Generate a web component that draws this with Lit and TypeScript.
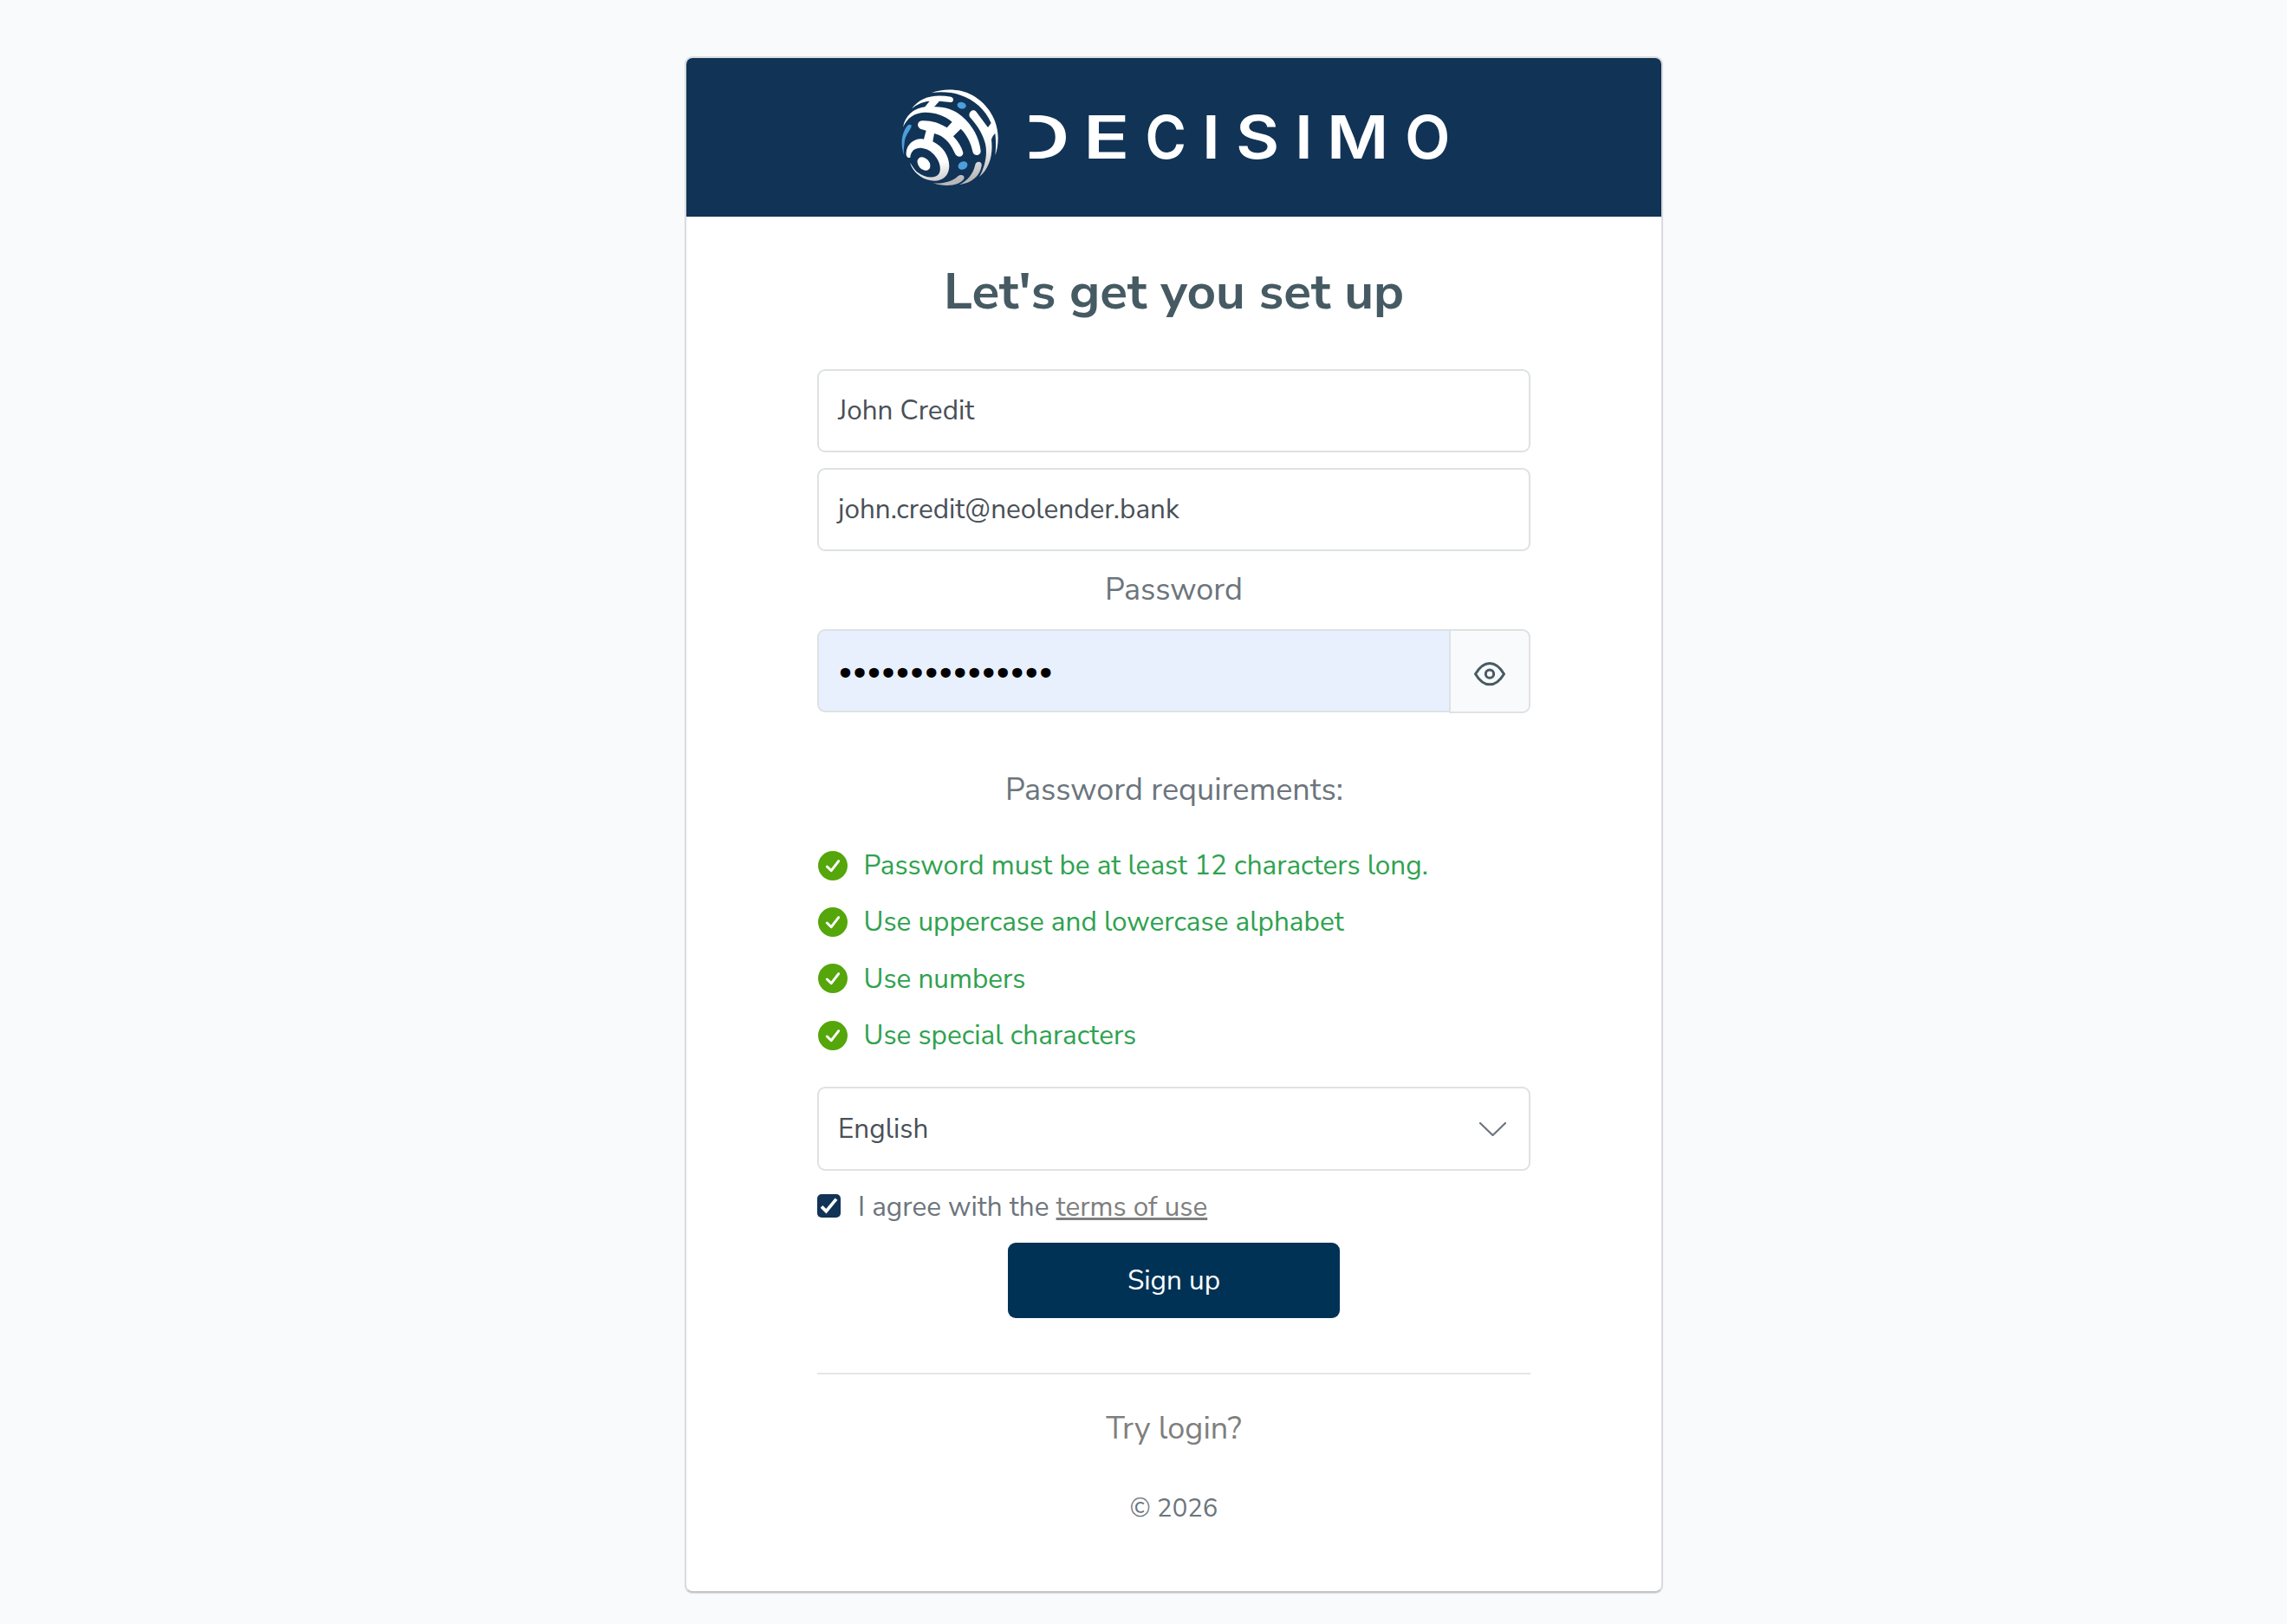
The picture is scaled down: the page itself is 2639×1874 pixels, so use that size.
import { LitElement, html, svg, css } from 'lit';
import { customElement, property, state } from 'lit/decorators.js';

interface Letter {
  char: string;
  width: number; // drawn width in px
  gap: number; // space before the letter
  scale: number;
  cut?: boolean; // drop the left stem
}

const WORDMARK: Letter[] = [
  { char: 'D', width: 42, gap: 0, scale: 1.38, cut: true },
  { char: 'E', width: 44, gap: 25.5, scale: 1.29 },
  { char: 'C', width: 42, gap: 25, scale: 0.94 },
  { char: 'I', width: 10, gap: 26, scale: 1.1 },
  { char: 'S', width: 46, gap: 26, scale: 1.13 },
  { char: 'I', width: 10, gap: 25.5, scale: 1.1 },
  { char: 'M', width: 62, gap: 26, scale: 1.13 },
  { char: 'O', width: 47, gap: 26, scale: 0.99 },
];

@customElement('brand-logo')
export class BrandLogo extends LitElement {
  static styles = css`
    :host {
      display: flex;
      align-items: center;
    }

    .globe {
      display: block;
      width: 112px;
      height: 112px;
      flex: none;
    }

    .wordmark {
      display: flex;
      margin-left: 35.5px;
      height: 50px;
      color: #fff;
      font-family: Inter, sans-serif;
      font-weight: 620;
      font-size: 68.5px;
      line-height: 50px;
    }

    .letter {
      display: flex;
      justify-content: center;
    }

    .letter.cut {
      justify-content: flex-end;
    }

    .letter.cut .glyph {
      transform-origin: 93% 50%;
      clip-path: inset(-20px -4px -20px 15.5px);
      margin-right: -3.5px;
    }
  `;

  render() {
    return html`
      <svg class="globe" viewBox="58 37 336 336">
        <defs>
          <linearGradient id="shade" gradientUnits="userSpaceOnUse" x1="215" y1="60" x2="275" y2="370">
            <stop offset="0.7" stop-color="#fff" />
            <stop offset="1" stop-color="#b4b4b6" />
          </linearGradient>
          <linearGradient id="edge" gradientUnits="userSpaceOnUse" x1="330" y1="180" x2="350" y2="340">
            <stop offset="0" stop-color="#fff" />
            <stop offset="0.4" stop-color="#f2f2f2" />
            <stop offset="1" stop-color="#b8b8ba" />
          </linearGradient>
        </defs>
        <g fill="url(#edge)">
          <path d="M163 49 C205 34 262 34 305 58 C358 88 393 145 393 205 C393 230 390 248 383 266 C386 240 386 215 383 190 C378 194 372 202 370 212 C376 258 366 310 328 340 C348 305 357 262 349 226 C340 190 318 158 295 133 C288 119 304 101 317 114 L358 169 L369 154 C350 108 310 72 262 57 C232 47 200 45 163 49 Z" />
          <path d="M314 298 C318 283 339 286 336 302 C331 335 305 361 258 368 C286 353 306 334 314 298 Z" />
          <path d="M252 340 C262 329 280 334 275 347 C262 369 215 378 168 362 C205 365 232 356 252 340 Z" />
        </g>
        <g fill="#fff">
          <path d="M94 104 C122 66 168 52 230 63 C243 67 239 83 228 82 L190 78 L172 98 C210 97 240 107 268 131 C305 162 328 205 333 250 C334 268 311 270 306 256 C299 222 286 196 264 174 L238 200 C255 218 267 238 272 256 C273 273 251 275 244 260 C232 229 212 206 188 195 L172 190 L167 218 C203 236 224 268 224 304 C223 340 196 359 160 353 C124 346 98 322 88 291 C98 303 101 314 115 325 C138 342 174 350 189 329 C203 302 177 258 146 245 C120 234 92 240 89 273 C80 278 74 268 75 257 C77 226 105 204 136 210 L144 180 L124 174 C108 164 116 145 132 146 C162 145 190 154 216 170 L234 150 C205 126 172 116 138 117 C103 119 79 136 64 168 C72 128 101 103 140 98 L156 78 C132 80 112 89 94 104 Z" fill="url(#shade)" />
          <ellipse cx="136" cy="295" rx="19" ry="26" transform="rotate(-41 136 295)" />
        </g>
        <g fill="#4a9fdc">
          <ellipse cx="267" cy="93" rx="15.500" ry="11.500" transform="rotate(12 267 93)" />
          <ellipse cx="271" cy="301" rx="17" ry="13.500" transform="rotate(-28 271 301)" />
          <path d="M80 162 C89 156 96 160 92 169 C82 190 71 198 69 222 C67 239 65 252 68 266 C54 230 58 188 80 162 Z" />
        </g>
      </svg>
      <div class="wordmark">
        ${WORDMARK.map(
          (l) => html`<span class="letter ${l.cut ? 'cut' : ''}" style="width:${l.width}px;margin-left:${l.gap}px"
            ><span class="glyph" style="transform:scaleX(${l.scale})">${l.char}</span></span
          >`,
        )}
      </div>
    `;
  }
}

@customElement('requirement-item')
export class RequirementItem extends LitElement {
  @property({ type: String }) label = '';

  static styles = css`
    :host {
      display: flex;
      align-items: center;
      gap: 18.5px;
      height: 65.3px;
      color: #2fa24f;
    }

    svg {
      width: 34px;
      height: 34px;
      flex: none;
      margin-left: 1px;
    }

    span {
      padding-top: 1px;
    }
  `;

  render() {
    return html`
      <svg viewBox="0 0 34 34">
        <circle cx="17" cy="17" r="17" fill="#54a60a" />
        <path d="M10.300 18 L15.200 22.600 L23.700 11.700" fill="none" stroke="#fff" stroke-width="3" stroke-linecap="round" stroke-linejoin="round" />
      </svg>
      <span>${this.label}</span>
    `;
  }
}

@customElement('app-root')
export class AppRoot extends LitElement {
  @state() private name = 'John Credit';
  @state() private email = 'john.credit@neolender.bank';
  @state() private passwordLength = 15;
  @state() private requirements = [
    'Password must be at least 12 characters long.',
    'Use uppercase and lowercase alphabet',
    'Use numbers',
    'Use special characters',
  ];

  static styles = css`
    :host {
      display: block;
      box-sizing: border-box;
      min-height: 1874px;
      padding: 65px 0 0 70px;
      background: #f9fafc;
      color: #6c757d;
      font-family: 'Nunito Sans', Nunito, 'Noto Sans', sans-serif;
      font-size: 31.5px;
      line-height: 1.4;
    }

    * {
      box-sizing: border-box;
    }

    .card {
      width: 1129px;
      height: 1773px;
      margin: 0 auto;
      background: #fff;
      border: 2px solid #d9dcdf;
      border-bottom-color: #c4c6c8;
      border-radius: 9px;
      box-shadow: 0 1px 1px rgba(0, 0, 0, 0.12);
      overflow: hidden;
    }

    .header {
      display: flex;
      height: 183px;
      padding: 0 0 0 248px;
      background: #113356;
    }

    .body {
      display: flex;
      flex-direction: column;
      padding: 0 151px;
    }

    h1 {
      margin: 47px 0 49px;
      height: 80px;
      line-height: 80px;
      font-size: 58.5px;
      font-weight: 700;
      color: #465a63;
      text-align: center;
    }

    .field {
      display: flex;
      align-items: center;
      height: 96px;
      padding: 0 22px;
      border: 2px solid #dee2e3;
      border-radius: 9px;
      color: #495057;
    }

    .field + .field {
      margin-top: 18px;
    }

    .label {
      height: 90px;
      line-height: 89px;
      font-size: 36px;
      text-align: center;
    }

    .group {
      display: flex;
      align-items: flex-start;
      height: 97px;
    }

    .password {
      flex: 1;
      border-right: 0;
      border-radius: 9px 0 0 9px;
      background: #e8f0fe;
      color: #000;
      font-family: 'DejaVu Sans', sans-serif;
      font-size: 39px;
      letter-spacing: -6.480px;
      padding: 8px 0 0 19px;
    }

    .toggle {
      display: flex;
      align-items: center;
      justify-content: center;
      width: 94px;
      height: 97px;
      padding-top: 7px;
      border: 2px solid #dee2e3;
      border-radius: 0 9px 9px 0;
      background: #f9fafc;
    }

    .toggle svg {
      width: 36px;
      height: 27.3px;
    }

    .requirements-title {
      margin-top: 44px;
      padding-left: 1px;
    }

    .requirements {
      margin-top: 9px;
    }

    .select {
      height: 97px;
      margin-top: 27px;
      justify-content: space-between;
      padding-right: 26.5px;
    }

    .select svg {
      width: 31px;
      height: 16px;
    }

    .terms {
      display: flex;
      align-items: center;
      height: 83px;
    }

    .terms svg {
      width: 27px;
      height: 27px;
      margin: -2px 20px 0 0;
    }

    .terms a {
      color: #7f7f7f;
      text-decoration: underline;
      text-decoration-thickness: 3px;
    }

    .submit {
      display: flex;
      align-items: center;
      justify-content: center;
      align-self: center;
      width: 383px;
      height: 87px;
      padding: 0;
      border: 0;
      border-radius: 9px;
      background: #003256;
      color: #fff;
      font: inherit;
    }

    .divider {
      height: 2px;
      margin-top: 63px;
      background: #e4e5e6;
    }

    .login {
      margin-top: 38px;
      height: 50px;
      line-height: 50px;
      font-size: 36px;
      color: #7f7f7f;
      text-align: center;
    }

    .copyright {
      margin-top: 46px;
      height: 40px;
      line-height: 40px;
      font-size: 29.2px;
      text-align: center;
    }
  `;

  render() {
    return html`
      <div class="card">
        <div class="header"><brand-logo></brand-logo></div>
        <div class="body">
          <h1>Let's get you set up</h1>
          <div class="field">${this.name}</div>
          <div class="field">${this.email}</div>
          <div class="label">Password</div>
          <div class="group">
            <div class="field password">${'•'.repeat(this.passwordLength)}</div>
            <div class="toggle">${this._eyeIcon()}</div>
          </div>
          <div class="label requirements-title">Password requirements:</div>
          <div class="requirements">
            ${this.requirements.map((r) => html`<requirement-item .label=${r}></requirement-item>`)}
          </div>
          <div class="field select">
            <span>English</span>
            <svg viewBox="0 0 31 16" fill="none" stroke="#6c757d" stroke-width="2.200" stroke-linecap="round" stroke-linejoin="round">
              <path d="M1 1 L15.500 15 L30 1" />
            </svg>
          </div>
          <div class="terms">
            <svg viewBox="0 0 81 81">
              <rect width="81" height="81" rx="15" fill="#113356" />
              <path d="M15 43 L31 59 L66 17" fill="none" stroke="#fff" stroke-width="11" />
            </svg>
            <span>I agree with the <a>terms of use</a></span>
          </div>
          <button class="submit">Sign up</button>
          <div class="divider"></div>
          <div class="login">Try login?</div>
          <div class="copyright">© 2026</div>
        </div>
      </div>
    `;
  }

  private _eyeIcon() {
    return html`<svg viewBox="0 0 108 82">
      ${svg`<g fill="none" stroke="#465a63" stroke-width="9" stroke-linejoin="round">
        <path d="M4.500 41 C20 15 38 4.500 54 4.500 C70 4.500 88 15 103.500 41 C88 67 70 77.500 54 77.500 C38 77.500 20 67 4.500 41 Z" />
        <circle cx="54" cy="41" r="14" />
      </g>`}
    </svg>`;
  }
}

declare global {
  interface HTMLElementTagNameMap {
    'app-root': AppRoot;
    'brand-logo': BrandLogo;
    'requirement-item': RequirementItem;
  }
}
